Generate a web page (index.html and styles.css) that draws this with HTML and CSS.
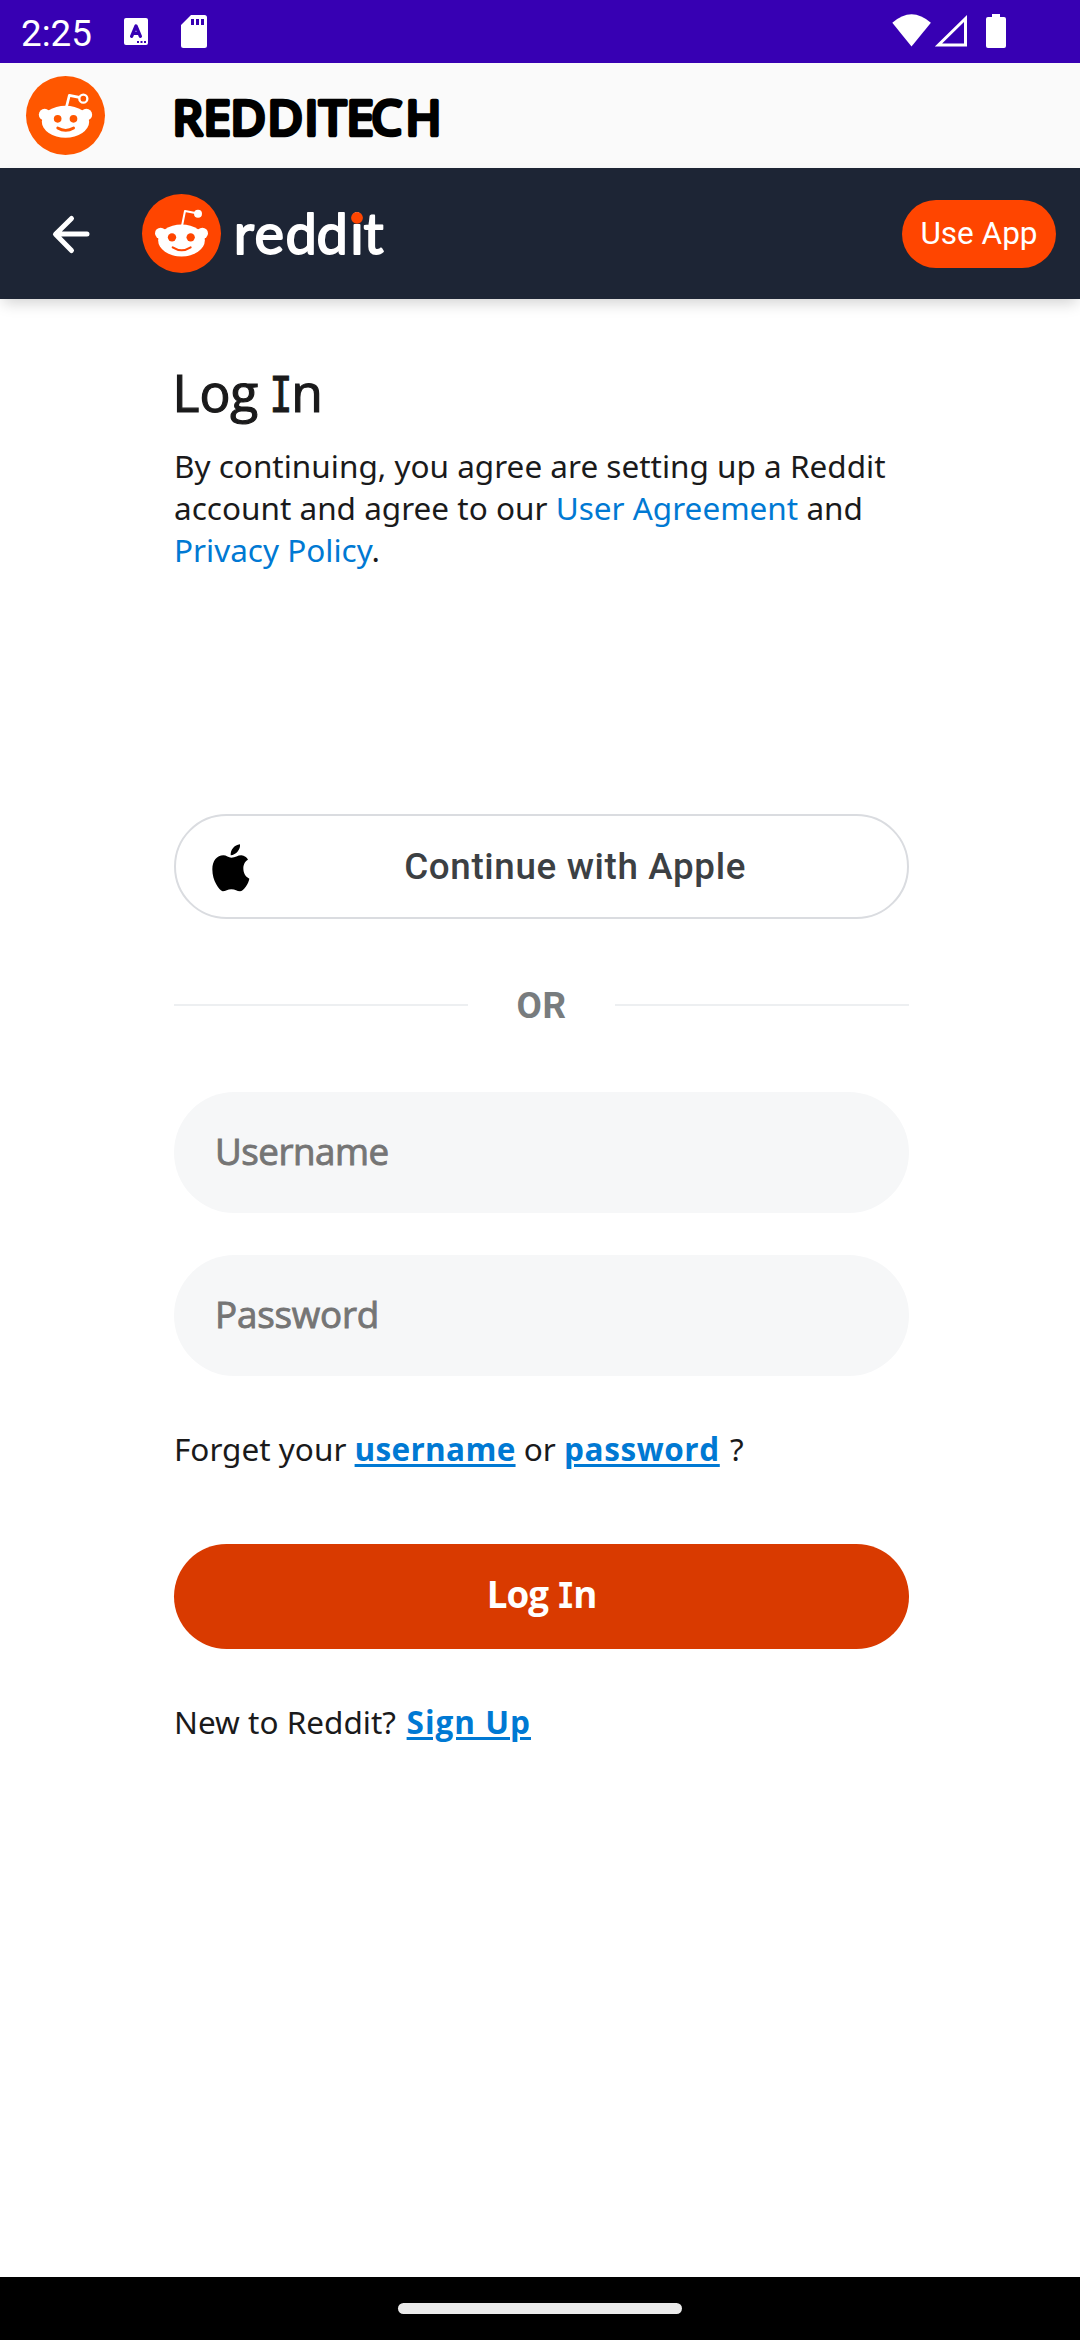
FILE: index.html
```html
<!DOCTYPE html>
<html lang="en">
<head>
<meta charset="utf-8">
<title>Redditech</title>
<link rel="stylesheet" href="styles.css">
</head>
<body>
<div class="status-bar">
  <span class="clock">2:25</span>
  <svg class="icon-keyboard" width="24" height="27" viewBox="0 0 24 27">
    <rect width="24" height="27" rx="2" fill="#fff"/>
    <path d="M7.600 18.300L12 8L16.400 18.300M9 15.300h6" fill="none" stroke="#3700b3" stroke-width="3.300" stroke-linecap="round" stroke-linejoin="round"/>
    <path d="M13 23h2v2h-2zM16.500 23h2v2h-2zM20 23h2v2h-2z" fill="#3700b3"/>
  </svg>
  <svg class="icon-card" width="26" height="33" viewBox="0 0 26 33">
    <path d="M10 0h13.500a2.500 2.500 0 0 1 2.500 2.500v28a2.500 2.500 0 0 1-2.500 2.500h-21a2.500 2.500 0 0 1-2.500-2.500V10z" fill="#fff"/>
    <path d="M10 4h3v6h-3zM15 4h3v6h-3zM20 4h3v6h-3z" fill="#3700b3"/>
  </svg>
  <svg class="icon-signal" width="115" height="35" viewBox="0 0 115 35">
    <path d="M0.300 8.800Q19.500-8.300 38.900 8.800L19.500 32.500z" fill="#fff"/>
    <path d="M73.500 4.500V31H46.500z" fill="none" stroke="#fff" stroke-width="3"/>
    <path d="M100 0h8v3h4a2 2 0 0 1 2 2v27a2 2 0 0 1-2 2H96a2 2 0 0 1-2-2V5a2 2 0 0 1 2-2h4z" fill="#fff"/>
  </svg>
</div>

<div class="app-bar">
  <svg class="app-logo" width="79" height="79" viewBox="78 228 237 237">
    <circle cx="196.500" cy="346.500" r="118.500" fill="#ff5700"/>
    <g fill="#fff">
      <ellipse cx="196.500" cy="365" rx="71" ry="48"/>
      <circle cx="134" cy="344" r="17.500"/>
      <circle cx="259" cy="344" r="17.500"/>
    </g>
    <path d="M199 322L208 286L238 292" fill="none" stroke="#fff" stroke-width="8" stroke-linejoin="round"/>
    <circle cx="250" cy="296" r="12" fill="#ff5700" stroke="#fff" stroke-width="7"/>
    <g fill="#ff5700"><circle cx="173" cy="356.500" r="11.500"/><circle cx="220.500" cy="356.500" r="11.500"/></g>
    <path d="M173 384Q197 398 221 384" fill="none" stroke="#ff5700" stroke-width="8" stroke-linecap="round"/>
  </svg>
  <svg class="app-title" width="276" height="80" viewBox="170 76 276 80">
    <text class="app-title-text" y="134.500" x="172.700 203.700 230.700 267.700 304.700 319.500 346.700 371.500 405.700">REDDITECH</text>
  </svg>
</div>

<header class="site-header">
  <svg class="back" width="40" height="40" viewBox="51 213 40 40">
    <path d="M87 233H56M71.500 217.500L55.500 233.300L71.500 249.500" fill="none" stroke="#fff" stroke-width="5" stroke-linecap="round" stroke-linejoin="round"/>
  </svg>
  <svg class="site-logo" width="79" height="79" viewBox="426 582 237 237">
    <circle cx="544.500" cy="700.500" r="118.500" fill="#ff4500"/>
    <g fill="#fff">
      <ellipse cx="544.500" cy="721.500" rx="70" ry="48"/>
      <circle cx="482" cy="700" r="17"/>
      <circle cx="607" cy="700" r="17"/>
      <circle cx="594" cy="641" r="12"/>
    </g>
    <path d="M546 678L555 633L590 640" fill="none" stroke="#fff" stroke-width="6" stroke-linejoin="round"/>
    <g fill="#ff4500"><circle cx="516" cy="712" r="12.500"/><circle cx="572" cy="712" r="12.500"/></g>
    <path d="M518 742Q545 759 572 742" fill="none" stroke="#ff4500" stroke-width="6" stroke-linecap="round"/>
  </svg>
  <svg class="wordmark" width="154" height="90" viewBox="232 189 154 90">
    <text class="wordmark-text" y="254" x="233.700 254.600 285.600 316.600 350.300 363.500">reddit</text>
    <circle cx="357" cy="217.800" r="5.900" fill="#ff4500"/>
  </svg>
  <button class="use-app">Use App</button>
</header>

<main class="login">
  <h1 class="title">Log <span class="cap-i">I</span>n</h1>
  <p class="terms">By continuing, you agree are setting up a Reddit account and agree to our <a class="link" href="#">User Agreement</a> and <a class="link" href="#">Privacy Policy</a>.</p>
  <button class="apple">
    <svg class="apple-icon" width="38" height="48" viewBox="155 134 114 144">
      <path d="M239 135C241 150 228 167 211 168C210 152 222 137 239 135zM213 175C225 175 232 168 243 168C252 168 260 175 263 181C252 187 249 198 249 207C249 222 256 233 267 238C265 252 250 275 239 276C230 276 225 270 213 270C202 270 196 276 187 276C176 272 156 245 156 210C156 184 170 169 189 168C198 168 205 175 213 175z"/>
    </svg>
    <span class="apple-label">Continue with Apple</span>
  </button>
  <div class="divider"><span class="rule"></span><span class="or">OR</span><span class="rule"></span></div>
  <input class="field" type="text" placeholder="Username">
  <input class="field field-password" type="password" placeholder="Password">
  <p class="hint forgot">Forget your <a class="strong-link" href="#">username</a> or <a class="strong-link password-link" href="#">password</a> ?</p>
  <button class="submit">Log <span class="cap-i-bold">I</span>n</button>
  <p class="hint signup">New to Reddit? <a class="strong-link sign-up-link" href="#">Sign Up</a></p>
</main>

<div class="nav-bar"><div class="nav-pill"></div></div>
</body>
</html>
```
FILE: styles.css
```css
* { box-sizing: border-box; }
body {
  margin: 0;
  width: 1080px;
  height: 2340px;
  display: flex;
  flex-direction: column;
  background: #fff;
  color: #1a1a1b;
  font-family: "Noto Sans", sans-serif;
  overflow: hidden;
}
button { border: 0; margin: 0; padding: 0; }
svg { display: block; flex: none; overflow: visible; }

.status-bar {
  height: 63px;
  flex: none;
  display: flex;
  align-items: flex-start;
  padding: 0 73px 0 21px;
  background: #3700b3;
}
.clock { width: 103px; font: 36.75px/67px Roboto, sans-serif; color: #fff; }
.icon-keyboard { margin-top: 18px; }
.icon-card { margin: 15px 0 0 33px; }
.icon-signal { margin: 14px 0 0 auto; }

.app-bar {
  height: 105px;
  flex: none;
  display: flex;
  align-items: center;
  padding-left: 26px;
  background: #fafafa;
}
.app-title { margin-left: 65px; }
.app-title-text {
  font: 400 48px "Open Sans", sans-serif;
  fill: #000;
  stroke: #000;
  stroke-width: 4.6px;
  stroke-linejoin: round;
}

.site-header {
  height: 131px;
  flex: none;
  display: flex;
  align-items: center;
  padding: 0 24px 0 51px;
  background: #1d2535;
  box-shadow: 0 7px 14px -3px rgba(0, 0, 0, .18);
}
.site-logo { margin-left: 51px; }
.wordmark { margin-left: 11px; }
.wordmark-text {
  font: 400 56px Lato, sans-serif;
  fill: #fff;
  stroke: #fff;
  stroke-width: 1.8px;
  stroke-linejoin: round;
}
.use-app {
  width: 154px;
  height: 68px;
  margin-left: auto;
  border-radius: 34px;
  background: #ff4500;
  color: #fff;
  font: 31.5px Roboto, sans-serif;
}

.login { flex: 1; display: flex; flex-direction: column; padding: 63px 171px 0 174px; }
.title {
  margin: 0 0 23px -1.5px;
  font: 400 51.5px/60px "Open Sans", sans-serif;
  height: 60px;
  -webkit-text-stroke: 1.2px currentColor;
}
.cap-i {
  display: inline-block;
  margin: 0 -5px 0 -5.7px;
  font: 400 50px/50px "DejaVu Sans Mono", monospace;
  transform: scaleX(.76);
}
.cap-i-bold {
  display: inline-block;
  margin: 0 -3px 0 -1px;
  font: 700 36px/36px "DejaVu Sans Mono", monospace;
  transform: scaleX(.8);
}
.terms { margin: 0; font-size: 31.5px; line-height: 42px; width: 730px; }
.link { color: #0079d3; text-decoration: none; }
.apple {
  display: flex;
  align-items: center;
  height: 105px;
  margin-top: 243px;
  border: 2px solid #dadce0;
  border-radius: 53px;
  background: #fff;
  color: #3c4043;
}
.apple-icon { margin: 3px 0 0 35.5px; }
.apple-label {
  flex: 1;
  padding-right: 161px;
  text-align: right;
  font: 500 36.75px Roboto, sans-serif;
  letter-spacing: .65px;
}
.divider { display: flex; align-items: center; justify-content: space-between; height: 44px; margin: 64px 0 65px; }
.rule { width: 294px; height: 2px; background: #edeff1; }
.or { font: 700 36.75px Roboto, sans-serif; letter-spacing: .5px; color: #787c7e; }
.field {
  height: 121px;
  padding: 0 42px 3px 41px;
  border: 0;
  border-radius: 61px;
  background: #f6f7f8;
  font: 400 36.75px "Open Sans", sans-serif;
  letter-spacing: -.5px;
}
.field::placeholder { color: #757575; opacity: 1; -webkit-text-stroke: .9px #757575; }
.field-password { margin-top: 42px; letter-spacing: -.2px; }
.hint { margin: 0; font-size: 31.5px; line-height: 42px; white-space: nowrap; }
.forgot { margin-top: 52px; }
.strong-link {
  color: #0079d3;
  font-family: "Open Sans", sans-serif;
  font-weight: 700;
  letter-spacing: .3px;
  text-decoration-line: underline;
  text-decoration-thickness: 3px;
  text-underline-offset: 3px;
}
.password-link { margin-right: 2px; letter-spacing: .6px; }
.sign-up-link { margin-left: 2.500px; letter-spacing: 1px; }
.submit {
  height: 105px;
  margin: 74px 0 52px;
  padding-bottom: 5px;
  border-radius: 53px;
  background: #d93a00;
  color: #fff;
  font: 700 36.75px/50px "Open Sans", sans-serif;
  letter-spacing: -1px;
}

.nav-bar { height: 63px; flex: none; display: flex; justify-content: center; padding-top: 26px; background: #000; }
.nav-pill { width: 284px; height: 11px; border-radius: 6px; background: #ebebeb; }
```
